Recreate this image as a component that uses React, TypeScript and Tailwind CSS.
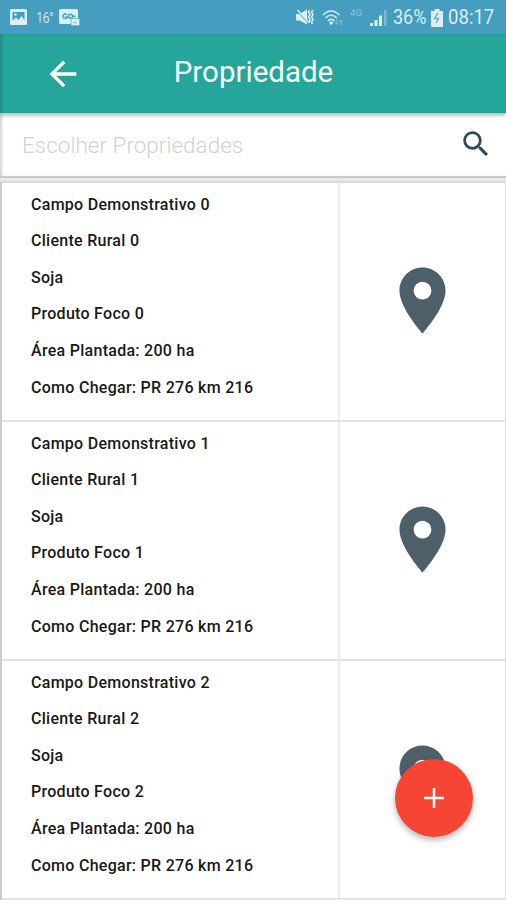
type Property = {
  name: string;
  client: string;
  crop: string;
  product: string;
  area: string;
  directions: string;
};

const properties: Property[] = [0, 1, 2].map((n) => ({
  name: `Campo Demonstrativo ${n}`,
  client: `Cliente Rural ${n}`,
  crop: "Soja",
  product: `Produto Foco ${n}`,
  area: "Área Plantada: 200 ha",
  directions: "Como Chegar: PR 276 km 216",
}));

function StatusBar() {
  return (
    <div className="flex h-[34px] shrink-0 items-center bg-[#459dc0] pl-[10px] pr-[11px] pt-px text-[#dceef6]">
      <svg className="mb-px h-[16px] w-[17px]" viewBox="0 0 17 16">
        <rect width="17" height="16" rx="1.5" fill="currentColor" />
        <path d="M2.5 3h12v8l-3-4-3 4-2.500-2.500-3.500 3z" fill="#459dc0" />
        <circle cx="5.500" cy="5.500" r="1.300" fill="currentColor" />
      </svg>
      <span className="ml-[9px] w-[15px] whitespace-nowrap">
        <span className="inline-block origin-left scale-x-[0.850] text-[15px] leading-[16px] tracking-[-0.800px] text-[#c5e1ee]">16°</span>
      </span>
      <svg className="ml-[8px] h-[17px] w-[21px]" viewBox="0 0 21 17">
        <rect width="19" height="15" rx="1.500" fill="currentColor" />
        <path
          d="M8 5.800a2.300 2.300 0 1 0 0 3V8H6.300M11.500 7.300m-2 0a2 2 0 1 0 4 0a2 2 0 1 0-4 0M13.500 7.300h3"
          fill="none"
          stroke="#459dc0"
          strokeWidth="1.400"
        />
        <rect x="12" y="9.500" width="8.500" height="7" rx="1" fill="currentColor" stroke="#79b8d1" />
        <path d="M14 13.500h4" stroke="#9ccbdd" strokeWidth="1.500" />
      </svg>
      <div className="ml-auto flex items-center">
        <svg className="h-[17px] w-[20px]" viewBox="0 0 20 17">
          <path d="M1 5h3.500L12 0.500v15L4.500 11.500H1z" fill="currentColor" />
          <path d="M1 0.500l13 14" stroke="#459dc0" strokeWidth="1.300" />
          <path d="M2.500 1l12 13" stroke="currentColor" strokeWidth="1.500" />
          <path
            d="M14.500 1l-1 2 1.500 2.500-1.500 2.500 1.500 2.500-1 3M18 1l-1.500 2 1.500 2.500-1.500 2.500 1.500 2.500-1.500 2.500 1 2"
            fill="none"
            stroke="currentColor"
            strokeWidth="1.500"
          />
        </svg>
        <svg className="ml-[7px] h-[18px] w-[22px]" viewBox="0 0 22 18">
          <g fill="none" stroke="currentColor" strokeWidth="1.600">
            <path d="M1 6Q9 -2 17.500 6" />
            <path d="M3.500 9Q9 3.500 15 9" />
            <path d="M6 12Q9 8.500 12.500 12" />
          </g>
          <circle cx="9.200" cy="14" r="1.700" fill="currentColor" />
          <path d="M15 10v5m-2-2l2 2.500M19 16v-5m-1.500 2L19 11l1.500 2" fill="none" stroke="#8dc3d8" />
        </svg>
        <span className="ml-[6px] mb-[9px] w-[13px] text-[9.500px] font-medium leading-none text-[#83bdd5]">4G</span>
        <svg className="ml-[7px] h-[17px] w-[17px]" viewBox="0 0 17 17">
          <path d="M0 14h3v3H0zM4.500 11h3v6h-3zM9 6.500h3V17H9z" fill="currentColor" />
          <path d="M14 1h2.500v16H14z" fill="#7bb9d2" />
        </svg>
        <span className="ml-[6px] w-[34px] whitespace-nowrap">
          <span className="inline-block origin-left scale-x-[0.900] text-[20px] leading-[24px]">36%</span>
        </span>
        <svg className="ml-[4px] h-[18px] w-[12px]" viewBox="0 0 12 18">
          <path d="M3.500 0h5v2H12v16H0V2h3.500z" fill="currentColor" />
          <path d="M7 4L3.500 9.500h4L5 14" fill="none" stroke="#79a9bb" strokeWidth="1.400" />
        </svg>
        <span className="ml-[5px] w-[47px] whitespace-nowrap">
          <span className="inline-block origin-left scale-x-[0.930] text-[20px] leading-[24px]">08:17</span>
        </span>
      </div>
    </div>
  );
}

function Header() {
  return (
    <header className="relative z-10 grid h-[79px] shrink-0 grid-cols-[104px_1fr_104px] items-center bg-[#26a69a] shadow-[0_3px_3px_rgba(0,0,0,0.220),inset_3px_0_3px_-1px_rgba(0,0,0,0.150)]">
      <button className="ml-[43px] w-[40px]" aria-label="Voltar">
        <svg className="h-[40px] w-[40px]" viewBox="0 0 24 24" fill="#fff">
          <path d="M20 11H7.830l5.590-5.590L12 4l-8 8 8 8 1.410-1.410L7.830 13H20v-2z" />
        </svg>
      </button>
      <h1 className="pb-[3px] pl-px text-center text-[29.500px] leading-[36px] text-[#f4fffd]">Propriedade</h1>
    </header>
  );
}

function SearchBar() {
  return (
    <div className="flex h-[65px] shrink-0 items-center justify-between border-b-2 border-[#c9c9c9] bg-white pl-[22px] pr-[13px] shadow-[inset_3px_0_3px_-1px_#d4d4d4]">
      <span className="text-[22.500px] font-light leading-[28px] text-[#d2d2d2]">Escolher Propriedades</span>
      <svg className="mb-[2px] h-[34px] w-[34px]" viewBox="0 0 24 24" fill="#294b58">
        <path d="M15.500 14h-.79l-.28-.27A6.471 6.471 0 0 0 16 9.500 6.500 6.500 0 1 0 9.500 16c1.610 0 3.090-.59 4.230-1.570l.27.28v.79l5 4.990L20.490 19l-4.990-5zm-6 0C7.010 14 5 11.990 5 9.500S7.010 5 9.500 5 14 7.010 14 9.500 11.990 14 9.500 14z" />
      </svg>
    </div>
  );
}

function PropertyRow({ item }: { item: Property }) {
  return (
    <li className="flex h-[239px] shrink-0 border-b-2 border-[#e4e4e4]">
      <div className="flex w-[338px] flex-col border-r-2 border-[#ededed] pl-[29px] pt-[3.700px] text-[16px] font-medium leading-[36.600px] tracking-[0.280px] text-[#191919]">
        <p>{item.name}</p>
        <p>{item.client}</p>
        <p>{item.crop}</p>
        <p>{item.product}</p>
        <p>{item.area}</p>
        <p>{item.directions}</p>
      </div>
      <div className="flex flex-1 justify-center pr-px pt-[77.500px]">
        <svg className="h-[79px] w-[79px]" viewBox="0 0 24 24" fill="#4d5f69">
          <path d="M12 2C8.130 2 5 5.130 5 9c0 5.250 7 13 7 13s7-7.750 7-13c0-3.870-3.130-7-7-7zm0 9.700a2.700 2.700 0 1 1 0-5.400 2.700 2.700 0 0 1 0 5.400z" />
        </svg>
      </div>
    </li>
  );
}

export default function App() {
  return (
    <div className="relative flex h-[900px] w-[506px] flex-col overflow-hidden bg-[#e9e9e9] font-[Roboto,sans-serif]">
      <StatusBar />
      <Header />
      <SearchBar />
      <ul className="mt-[3px] flex flex-col border-l-2 border-r border-t-2 border-l-[#cdcdcd] border-r-[#dedede] border-t-[#d9d9d9] bg-white">
        {properties.map((item) => (
          <PropertyRow key={item.name} item={item} />
        ))}
      </ul>
      <button
        className="absolute bottom-[63px] right-[33px] flex h-[78px] w-[78px] items-center justify-center rounded-full bg-[#f64435] shadow-[0_3px_6px_rgba(0,0,0,0.300)]"
        aria-label="Adicionar"
      >
        <svg className="h-[20px] w-[20px]" viewBox="0 0 20 20">
          <path d="M10 0v20M0 10h20" stroke="#fff" strokeWidth="2.500" />
        </svg>
      </button>
    </div>
  );
}
